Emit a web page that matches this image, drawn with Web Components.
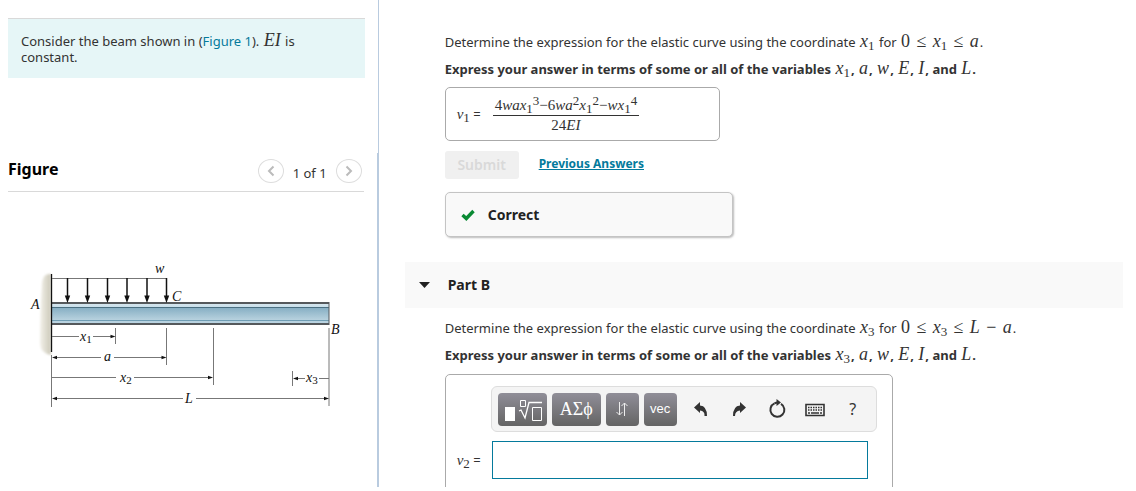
<!DOCTYPE html>
<html lang="en">
<head>
<meta charset="utf-8">
<title>Elastic curve of a beam</title>
<style>
  html, body { margin: 0; background: #fff; }
  body { font: 13px/16px "Noto Sans", "Open Sans", sans-serif; color: #333; }
</style>
</head>
<body>
<course-page>
  <problem-intro slot="side">Consider the beam shown in (<a-link href="#figure">Figure 1</a-link>). <math-var>EI</math-var> is<br>constant.</problem-intro>
  <figure-panel slot="side" heading="Figure"><beam-figure></beam-figure></figure-panel>

  <part-section>
    <span slot="question">Determine the expression for the elastic curve using the coordinate <math-var sub="1">x</math-var> for <math-var upright>0</math-var> <math-var rel>≤</math-var> <math-var sub="1">x</math-var> <math-var rel>≤</math-var> <math-var>a</math-var>.</span>
    <span slot="instruction">Express your answer in terms of some or all of the variables <math-var sub="1">x</math-var>, <math-var>a</math-var>, <math-var>w</math-var>, <math-var>E</math-var>, <math-var>I</math-var>, and <math-var>L</math-var>.</span>
    <given-answer></given-answer>
    <submit-row></submit-row>
    <result-box>Correct</result-box>
  </part-section>

  <part-section heading="Part B">
    <span slot="question">Determine the expression for the elastic curve using the coordinate <math-var sub="3">x</math-var> for <math-var upright>0</math-var> <math-var rel>≤</math-var> <math-var sub="3">x</math-var> <math-var rel>≤</math-var> <math-var>L</math-var> <math-var rel>−</math-var> <math-var>a</math-var>.</span>
    <span slot="instruction">Express your answer in terms of some or all of the variables <math-var sub="3">x</math-var>, <math-var>a</math-var>, <math-var>w</math-var>, <math-var>E</math-var>, <math-var>I</math-var>, and <math-var>L</math-var>.</span>
    <answer-entry></answer-entry>
  </part-section>
</course-page>

<script>
class Base extends HTMLElement {
  connectedCallback() {
    if (this.shadowRoot) return;
    this.attachShadow({ mode: "open" }).innerHTML = this.view();
  }
}
const define = (name, view) =>
  customElements.define(name, class extends Base { view() { return view(this); } });

define("math-var", el => {
  const sub = el.getAttribute("sub");
  return `<style>
    :host { padding: 0 1px; font-family: "Liberation Serif", serif; font-size: 18px; line-height: 1px; font-weight: 400; font-style: italic; white-space: nowrap; }
    :host([upright]), :host([rel]) { font-style: normal; }
    :host([rel]) { padding: 0 2px; }
    :host([small]) { padding: 0; font-size: 15px; }
    sub, sup { font-size: 13px; line-height: 1px; font-style: normal; }
    sub { vertical-align: -3px; } sup { vertical-align: 5px; }
  </style><slot></slot>${sub ? `<sub>${sub}</sub>` : ""}${el.hasAttribute("sup") ? `<sup>${el.getAttribute("sup")}</sup>` : ""}`;
});

define("a-link", el => `<style>a { color: #047a9c; text-decoration: none; }</style><a href="${el.getAttribute("href")}"><slot></slot></a>`);

define("course-page", () => `<style>
  :host { display: block; box-sizing: border-box; height: 100vh; padding-bottom: 4px; overflow: hidden; }
  .cols { display: grid; grid-template-columns: 1fr 2fr; height: 100%; }
  aside { display: flex; flex-direction: column; box-sizing: border-box; padding-top: 18px; box-shadow: inset -1px 0 #b9cbdf; }
  main { min-width: 0; overflow: hidden; box-sizing: border-box; padding: 22px 13px 0 26px; }
</style>
<div class="cols"><aside><slot name="side"></slot></aside><main><slot></slot></main></div>`);

define("problem-intro", () => `<style>
  :host { display: block; margin: 0 14px 0 8px; border-top: 1px solid #d9d9d9; background: #e6f6f7; }
  p { margin: 0; padding: 14px 13px 13px; }
</style><p><slot></slot></p>`);

define("figure-panel", el => `<style>
  :host { display: flex; flex-direction: column; flex: 1; margin-top: 75px; border-right: 2px solid #b9cbdf; padding-left: 8px; }
  header { display: flex; align-items: center; height: 38px; margin-right: 13px; border-bottom: 1px solid #d9d9d9; }
  h2 { flex: 1; margin: 0; font-size: 16px; line-height: 20px; color: #000; padding-bottom: 6px; }
  nav { display: flex; align-items: center; gap: 9px; margin-right: 2px; padding-bottom: 2px; }
  button { display: grid; place-items: center; width: 26px; height: 24px; padding: 0; border: 1px solid #ddd; border-radius: 50%; background: #fff; }
  span { padding-top: 3px; }
  path { fill: none; stroke: #bbb; stroke-width: 2; }
  .art { padding-top: 68px; }
</style>
<header><h2 id="figure">${el.getAttribute("heading")}</h2>
<nav><button aria-label="Previous figure"><svg width="8" height="12"><path d="M6.500 1.500 2 6l4.500 4.500"/></svg></button><span>1 of 1</span><button aria-label="Next figure"><svg width="8" height="12"><path d="M1.500 1.500 6 6 1.500 10.500"/></svg></button></nav></header>
<div class="art"><slot></slot></div>`);

define("beam-figure", () => {
  const right = (x, y) => `<path class="f" d="M${x} ${y}l-5-1.700v3.400z"/>`;
  const left = (x, y) => `<path class="f" d="M${x} ${y}l5-1.700v3.400z"/>`;
  const loads = [67.5, 87.5, 107.5, 127, 147, 166.5].map(x =>
    `<path class="k" d="M${x} 278V297"/><path class="f" d="M${x} 303l-2.700-7.500h5.400z"/>`).join("");
  return `<style>
    :host { display: block; }
    svg { display: block; width: 340px; height: 155px; font: italic 14px "Liberation Serif", serif; }
    .l { stroke: #777; stroke-width: 1; fill: none; }
    .k { stroke: #111; stroke-width: 1.500; }
    .f, text { fill: #111; }
    .s { font-size: 11px; font-style: normal; }
  </style>
  <svg viewBox="8 260 340 155" role="img" aria-label="Cantilever beam with a partial distributed load">
    <defs>
      <linearGradient id="b" x2="0" y2="1"><stop offset="0" stop-color="#dbe9f0"/><stop offset=".18" stop-color="#c8dfea"/><stop offset=".2" stop-color="#84adc2"/><stop offset=".8" stop-color="#b7d1de"/><stop offset="1" stop-color="#b9d4e2"/></linearGradient>
      <linearGradient id="w"><stop offset="0" stop-color="#f3f1ea"/><stop offset="1" stop-color="#ccc9b9"/></linearGradient>
      <filter id="s"><feGaussianBlur stdDeviation="1"/></filter>
    </defs>
    <path d="M51 274q-8-1-9 9-2 32-2 60 0 10 11 12z" fill="url(#w)" filter="url(#s)"/>
    <rect x="52" y="303" width="277" height="21" fill="url(#b)"/>
    <path d="M52 307.500H329" stroke="#4b7082"/><path d="M52 320.500H329" stroke="#6f9db4"/>
    <path d="M52 303H329M52 324H329" stroke="#55595c" stroke-width="2"/>
    <path d="M329 302V325" stroke="#55595c"/>
    <path d="M51.500 274V352" stroke="#111" stroke-width="1.300"/>
    <path class="l" d="M52 278.500H167M51.500 355V407M115.500 328V344M166.500 328V365M213.500 328V385M292.500 371V386M329 328V406"/>
    ${loads}
    <path class="l" d="M52 336.500H79M93 336.500H113M54 357.500H101M114 357.500H164M52 377.500H116M134 377.500H211M54 398.500H183M196 398.500H327M295 378.500H305M319 378.500H329"/>
    ${right(115.5, 336.5)}${left(52, 357.5)}${right(166.5, 357.5)}${right(213, 377.5)}${left(52, 398.5)}${right(329, 398.5)}${left(293, 378.5)}
    <text x="155" y="273">w</text><text x="31" y="309">A</text><text x="172" y="301">C</text><text x="331" y="334">B</text>
    <text x="80" y="341">x<tspan class="s" dy="2">1</tspan></text><text x="104" y="361">a</text>
    <text x="120" y="382">x<tspan class="s" dy="2">2</tspan></text><text x="185" y="403">L</text>
    <text x="306" y="382">x<tspan class="s" dy="2">3</tspan></text>
  </svg>`;
});

define("part-section", el => {
  const h = el.getAttribute("heading");
  return `<style>
    :host { display: block; }
    header { display: flex; align-items: center; gap: 18px; height: 46px; margin-top: 24px; padding-left: 14px; background: #f9f9f9; color: #222; }
    h2 { margin: 0; font-size: 14px; line-height: 20px; }
    .body { padding: 10px 0 0 40px; }
    p { margin: 0 0 7px; line-height: 20px; white-space: nowrap; }
    .strong { font-weight: 700; margin-bottom: 8px; }
  </style>
  ${h ? `<header><svg width="11" height="7" aria-hidden="true"><path d="M0 0H11L5.500 6z" fill="#222"/></svg><h2>${h}</h2></header>` : ""}
  <div class="body"><p><slot name="question"></slot></p><p class="strong"><slot name="instruction"></slot></p><slot></slot></div>`;
});

define("given-answer", () => `<style>
  :host { display: flex; align-items: center; box-sizing: border-box; width: 275px; height: 54px; padding-left: 11px; border: 1px solid #aaa; border-radius: 5px; }
  .name { width: 36px; }
  .frac { display: flex; flex-direction: column; text-align: center; }
  .frac > div { height: 19px; line-height: 19px; }
  .frac > .num { border-bottom: 1px solid #333; padding: 2px 2px 0; }
</style>
<div class="name"><math-var small sub="1">v</math-var> =</div>
<div class="frac"><div class="num"><math-var small upright>4</math-var><math-var small>wa</math-var><math-var small sub="1" sup="3">x</math-var><math-var small upright>−6</math-var><math-var small>w</math-var><math-var small sup="2">a</math-var><math-var small sub="1" sup="2">x</math-var><math-var small upright>−</math-var><math-var small>w</math-var><math-var small sub="1" sup="4">x</math-var></div>
<div><math-var small upright>24</math-var><math-var small>EI</math-var></div></div>`);

define("submit-row", () => `<style>
  :host { display: flex; align-items: center; gap: 20px; margin-top: 10px; }
  button { width: 74px; height: 28px; padding: 0; border: 0; border-radius: 3px; background: #f0f0f0; color: #d9d9d9; font: 600 14px/20px "Noto Sans", sans-serif; }
  a { color: #047a9c; font-weight: 700; font-size: 12px; text-underline-offset: 1px; padding-bottom: 3px; }
</style><button disabled>Submit</button><a href="#answers">Previous Answers</a>`);

define("result-box", () => `<style>
  :host { display: flex; align-items: center; gap: 13px; box-sizing: border-box; width: 288px; height: 45px; margin-top: 13px; margin-bottom: 25px; padding-left: 15px; border: 1px solid #c4c4c4; border-radius: 5px; background: #f9f9f9; box-shadow: 1px 1px 2px #bbb; color: #222; font-weight: 700; font-size: 14px; }
</style><svg width="14" height="12" aria-hidden="true"><path d="M1.500 6 5.300 9.500 12.500 2" fill="none" stroke="#0a8a34" stroke-width="3.400"/></svg><span><slot></slot></span>`);

define("answer-entry", () => `<style>
  :host { display: grid; grid-template-columns: 34px 1fr; row-gap: 9px; align-items: center; align-content: start; box-sizing: border-box; width: 448px; height: 160px; margin-top: 9px; padding: 11px 15px 0 11px; border: 1px solid #aaa; border-radius: 5px; }
  [role=toolbar] { grid-column: 2; display: flex; align-items: center; gap: 5px; box-sizing: border-box; height: 46px; padding-left: 6px; border: 1px solid #ddd; border-radius: 6px; background: #f4f4f4; }
  button { display: grid; place-items: center; height: 33px; padding: 0; border: 0; border-radius: 4px; background: linear-gradient(#908e98, #646464); color: #fff; font: 13px/16px "Liberation Sans", sans-serif; }
  .wide { width: 49px; } .mid { width: 33px; }
  .greek { font: 18px/20px "Liberation Serif", serif; }
  .tools { display: flex; }
  .tools button { width: 38px; background: none; color: #333; }
  .tools .help { font: 16px/20px "Noto Sans", sans-serif; }
  input { box-sizing: border-box; width: 376px; height: 38px; margin: 0 0 0 1px; padding: 0 8px; border: 1px solid #047a9c; border-radius: 0; background: #fff; outline: 0; }
</style>
<div role="toolbar" aria-label="Math tools">
  <button class="wide" aria-label="Templates"><svg width="42" height="26" fill="none" stroke="#fff"><path d="M4 11h10v14H4z" fill="#fff" stroke="none"/><path d="M19.500 4.500h5v6h-5z"/><path d="M18 15l2-1 4 8 4-15.500H41" stroke-width="1.300"/><path d="M31.500 11.500h9v13h-9z"/></svg></button>
  <button class="wide greek">ΑΣϕ</button>
  <button class="mid" aria-label="Subscripts and arrows"><svg width="14" height="16" fill="none" stroke="#eee"><path d="M4.500 1v13M1.500 11l3 3 3-3M9.500 15V2M6.500 5l3-3 3 3"/></svg></button>
  <button class="mid">vec</button>
  <div class="tools">
    <button aria-label="Undo"><svg width="16" height="16"><path d="M1 6.500 7 1v3.500q7 .5 7 10.500h-2.500q.5-5-4.500-5.500V12z" fill="#333"/></svg></button>
    <button aria-label="Redo"><svg width="16" height="16"><path d="M15 6.500 9 1v3.500q-7 .5-7 10.500h2q0-5 5-5.500V12z" fill="#333"/></svg></button>
    <button aria-label="Reset"><svg width="18" height="20"><path d="M13 4.800A7 7 0 1 1 6.500 4.400" fill="none" stroke="#333" stroke-width="2"/><path d="M6.500 4.400Q8 3.600 10 3.600" fill="none" stroke="#333" stroke-width="2"/><path d="M8.500 0l4.500 3.500-4.500 3.500z" fill="#333"/></svg></button>
    <button aria-label="Keyboard shortcuts"><svg width="20" height="16" fill="none" stroke="#333"><path d="M1 3.500h18v11H1z" stroke-width="1.600"/><path d="M3 6.500h14M3 9h14" stroke-width="1.500" stroke-dasharray="1.500 1"/><path d="M3 12h2M6 12h8M15 12h2" stroke-width="1.500"/></svg></button>
    <button class="help" aria-label="Help">?</button>
  </div>
</div>
<label for="v2"><math-var small sub="2">v</math-var> =</label><input id="v2" type="text">`);
</script>
</body>
</html>
